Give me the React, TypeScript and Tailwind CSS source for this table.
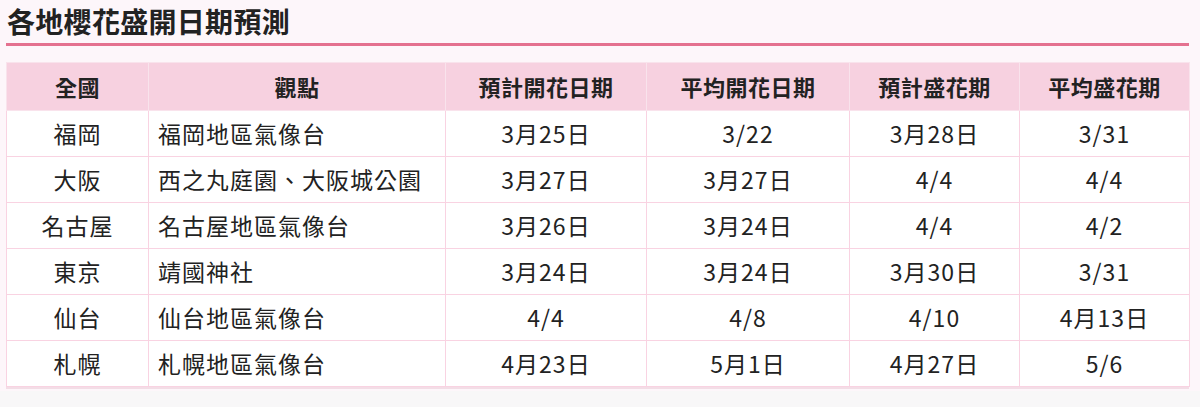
const rows = [
  { area: "福岡", spot: "福岡地區氣像台", open: "3月25日", avgOpen: "3/22", full: "3月28日", avgFull: "3/31" },
  { area: "大阪", spot: "西之丸庭園、大阪城公園", open: "3月27日", avgOpen: "3月27日", full: "4/4", avgFull: "4/4" },
  { area: "名古屋", spot: "名古屋地區氣像台", open: "3月26日", avgOpen: "3月24日", full: "4/4", avgFull: "4/2" },
  { area: "東京", spot: "靖國神社", open: "3月24日", avgOpen: "3月24日", full: "3月30日", avgFull: "3/31" },
  { area: "仙台", spot: "仙台地區氣像台", open: "4/4", avgOpen: "4/8", full: "4/10", avgFull: "4月13日" },
  { area: "札幌", spot: "札幌地區氣像台", open: "4月23日", avgOpen: "5月1日", full: "4月27日", avgFull: "5/6" },
];

const headers = ["全國", "觀點", "預計開花日期", "平均開花日期", "預計盛花期", "平均盛花期"];
const widths = ["w-[142px]", "w-[297px]", "w-[201px]", "w-[203px]", "w-[170px]", "w-[170px]"];

export default function App() {
  return (
    <div
      className="min-h-[407px] w-[1200px] bg-[#f8f7f8] text-[#222]"
      style={{ fontFamily: '"Noto Sans CJK TC", "Noto Sans", sans-serif' }}
    >
      <div className="bg-[#fdf6fa] pb-[2px]">
        <h1 className="pl-[7px] pt-[2px] text-[28px] font-bold leading-[38px] tracking-[0.3px]">各地櫻花盛開日期預測</h1>
        <div className="ml-[6px] mr-[11px] mt-[3px] h-[3px] bg-[#e4718f]" />

        <div className="ml-[6px] mt-[16px] w-[1183px] border-b-2 border-[#f3dde6]">
          <table className="w-full table-fixed border-collapse">
            <thead>
              <tr className="h-[48px] bg-[#f7d1e0]">
                {headers.map((h, i) => (
                  <th
                    key={h}
                    scope="col"
                    className={`${widths[i]} border border-[#f9e3ec] text-center text-[22px] font-bold tracking-[0.5px]`}
                  >
                    {h}
                  </th>
                ))}
              </tr>
            </thead>
            <tbody className="bg-white text-[23px] tracking-[1px]">
              {rows.map((r) => (
                <tr key={r.area} className="h-[46px]">
                  <td className="border border-[#f9d3e2] text-center">{r.area}</td>
                  <td className="border border-[#f9d3e2] pl-[9px] text-left">{r.spot}</td>
                  <td className="border border-[#f9d3e2] text-center">{r.open}</td>
                  <td className="border border-[#f9d3e2] text-center">{r.avgOpen}</td>
                  <td className="border border-[#f9d3e2] text-center">{r.full}</td>
                  <td className="border border-[#f9d3e2] text-center">{r.avgFull}</td>
                </tr>
              ))}
            </tbody>
          </table>
        </div>
      </div>
    </div>
  );
}
